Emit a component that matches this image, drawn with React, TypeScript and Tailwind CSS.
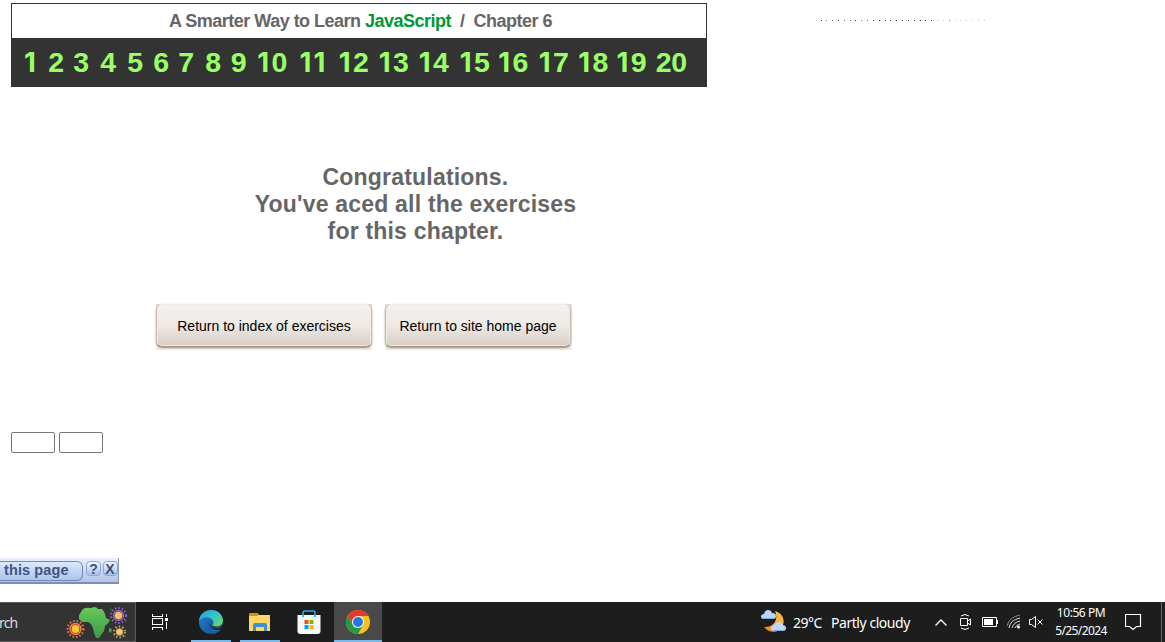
import React from "react";

const chapters = [
  { n: 1, center: 30.5 }, { n: 2, center: 56 }, { n: 3, center: 81 }, { n: 4, center: 108 },
  { n: 5, center: 135 }, { n: 6, center: 161 }, { n: 7, center: 186 }, { n: 8, center: 213 },
  { n: 9, center: 238.5 }, { n: 10, center: 271.5 }, { n: 11, center: 313 }, { n: 12, center: 353 },
  { n: 13, center: 393 }, { n: 14, center: 433 }, { n: 15, center: 474 }, { n: 16, center: 512.5 },
  { n: 17, center: 553 }, { n: 18, center: 592.5 }, { n: 19, center: 630.8 }, { n: 20, center: 671.3 },
];

const dots = [
  821, 826, 832, 838, 844, 850, 855, 861, 867, 873, 879, 885, 890, 896, 902, 908, 914, 920, 925, 931,
  937, 943, 949, 955, 960, 966, 972, 978, 984,
];

function Digit({ value, tight }: { value: string; tight: boolean }) {
  const width = tight ? "w-[14px]" : "w-[15.6px]";
  return value === "1" ? (
    <span className={"inline-block pr-[1px] text-center font-['Inter'] text-[27.5px] font-bold " + width}>1</span>
  ) : (
    <span className={"inline-block text-center " + width}>{value}</span>
  );
}

function Header() {
  return (
    <header className="ml-[11px] h-[84px] w-[696px] border border-[#333]">
      <h1 className="flex h-[34px] items-center justify-center whitespace-pre pl-[3px] text-[18px] font-bold tracking-[-0.51px] text-[#666]">
        A Smarter Way to Learn <span className="text-[#093]">JavaScript</span>{"  /  Chapter 6"}
      </h1>
      <nav className="flex h-[48px] items-baseline bg-[#333] pt-[1px] text-[28.5px] font-bold leading-[46px] text-[#9f6]">
        {chapters.map((c, i) => {
          const half = c.n > 9 ? 16 : 8;
          const prev = i ? chapters[i - 1].center + (chapters[i - 1].n > 9 ? 16 : 8) : 12;
          return (
            <a key={c.n} className="block shrink-0 whitespace-nowrap text-center" style={{ width: half * 2, marginLeft: c.center - half - prev }}>
              {String(c.n).split("").map((d, k) => <Digit key={k} value={d} tight={c.n === 11} />)}
            </a>
          );
        })}
      </nav>
    </header>
  );
}

function DottedLine() {
  return (
    <svg className="ml-[113px] mt-[17px]" width="168" height="2" shapeRendering="crispEdges">
      {dots.map((x, i) => (
        <rect key={x} x={x - 820} y="0" width="1" height="1" fill={i === 22 ? "#7777aa" : i > 19 ? "#c5c5c5" : i < 9 && i % 3 ? "#777" : "#333"} />
      ))}
    </svg>
  );
}

function ImageButton({ className, children }: { className: string; children: React.ReactNode }) {
  return (
    <div className={"h-[46px] bg-linear-to-b from-[#e4dfd9] from-5% via-[#fbfaf8] via-15% to-[#f1ede8] pb-[3px] " + className}>
      <button className="flex h-[43px] w-full items-center justify-center whitespace-nowrap rounded-[6px] border border-t-0 border-[#c5bbb1] border-b-[#a29283] bg-linear-to-b from-[#f4f1ee] via-[#eeeae6] to-[#d8cdc3] pt-[2px] text-[14px] text-black shadow-[inset_0_0_0_1px_#f1ece7,0_1px_2px_#9b8b7b]">
        {children}
      </button>
    </div>
  );
}

function PageBar() {
  const key = "flex h-[15px] w-[15px] items-center justify-center rounded-[4px] border border-[#8fa6cf] bg-linear-to-b from-[#f2f7ff] to-[#a8bfea] text-[14px] font-bold leading-none text-[#3d517d]";
  return (
    <div className="flex h-[26px] w-[119px] border-b-2 border-r border-[#8797bd] border-b-[#7d8eb7] bg-linear-to-b from-[#e9f0fd] to-[#b2c4e8]">
      <div className="mt-[3px] flex h-[20px] w-[83px] items-center whitespace-nowrap rounded-r-[6px] border border-l-0 border-[#7387b4] bg-linear-to-b from-[#dce8fb] to-[#adc4ee] pl-[4px] text-[14.5px] font-bold tracking-[0.1px] text-[#40547f]">
        this page
      </div>
      <div className="ml-[3px] mt-[3px] flex gap-[1.5px]">
        <span className={key}>?</span>
        <span className={key}>X</span>
      </div>
    </div>
  );
}

function Sun({ x, y, r, ray, core }: { x: number; y: number; r: number; ray: string; core: string }) {
  return (
    <g transform={`translate(${x} ${y})`}>
      <circle r={r} fill="none" stroke={ray} strokeWidth="2" strokeDasharray="1.5 2" />
      <circle r={r - 2.6} fill="none" stroke={ray} strokeWidth="1.6" />
      <circle r={r * 0.5} fill={core} />
    </g>
  );
}

function SearchArt() {
  return (
    <svg className="ml-[48px] shrink-0" width="64" height="34" viewBox="64 604 64 34">
      <defs>
        <linearGradient id="land" x1="0" y1="0" x2="0" y2="1"><stop stopColor="#68c958" /><stop offset="1" stopColor="#3d9b47" /></linearGradient>
      </defs>
      <path fill="url(#land)" d="M83 608Q86 606 91 607L94 606Q97 606 98 608L102 608Q104 610 105 613L106 617 110 619Q109 622 105 625L104 630 101 634 99 637H96L94 632 93 627 91 623 88 621 82 621 79 618V614ZM109 627l3 1-1 4-2-1Z" />
      <Sun x={75.5} y={628} r={8} ray="#f77a4c" core="#ffc52e" />
      <Sun x={118.5} y={614.5} r={7.5} ray="#9262c8" core="#f6be66" />
      <Sun x={119.5} y={631} r={5.5} ray="#c4a65c" core="#fbc278" />
      <path d="M111 610v-3M127 619l-2 2M113 636l2-2M126 636l-2-2" stroke="#278039" />
    </svg>
  );
}

function EdgeIcon() {
  return (
    <svg width="24" height="24" viewBox="0 0 24 24">
      <defs>
        <linearGradient id="edgeTop" x1="0" y1="0" x2="1" y2="1"><stop stopColor="#249ae1" /><stop offset=".5" stopColor="#35c7cb" /><stop offset="1" stopColor="#70db52" /></linearGradient>
        <linearGradient id="edgeLow" x1="0" y1="0" x2="1" y2="1"><stop stopColor="#2485d1" /><stop offset="1" stopColor="#104a91" /></linearGradient>
      </defs>
      <circle cx="12" cy="12" r="12" fill="url(#edgeLow)" />
      <path fill="#222" d="M14 10.5c2 2 1 4-.1 5 1 2 5 2.500 8.600.5l1.500-4-4-5Z" />
      <path fill="url(#edgeTop)" d="M0 11C.5 4 6 0 12 0c7 0 12 5 12 10.500 0 4-3 6-6 6-3 0-4.500-1-4.200-2 1-1.200 1-3 .2-4C11 6 3 6 0 11Z" />
      <path fill="#1861ab" d="M8.500 12c-2 5 2 11 7 11.500 3-.5 5.500-2.500 7-5-5 2-9 .5-10-3-.5-2 0-3 .5-4-1.500-1-3.500-.5-4.500.5Z" />
      <path fill="#222" d="M11.500 12.500c-1.300 3.500 3 6.700 8 5.600 1.500-.3 3-1 3.200-.9l1.300-2.500v3l-1 2.300c.2-.6 0-1-.7-.8-3 1-8 1-10.500-2-1.500-2-1-4-.3-4.700Z" />
    </svg>
  );
}

function FolderIcon() {
  return (
    <svg width="22" height="19" viewBox="0 0 22 19">
      <path fill="#ffd767" d="M0 2h21v16H0Z" />
      <path fill="#d9910d" d="M0 1q0-1 1-1h8l1 2-2 1H0Z" />
      <path fill="#3c91d5" d="M4 18v-6q0-2 2-2h10q2 0 2 2v6h-3v-4H7v4Z" />
    </svg>
  );
}

function StoreIcon() {
  return (
    <svg width="24" height="24" viewBox="0 0 24 24">
      <path fill="#f7f7f7" d="M.5 5h23v16q0 3-3 3h-17q-3 0-3-3Z" />
      <path d="M6 7V3q0-2 2-2h8q2 0 2 2v4" fill="none" stroke="#25abe3" strokeWidth="1.700" />
      <path fill="#f25022" d="M7.500 10h4v4h-4Z" /><path fill="#7fba00" d="M12.500 10h4v4h-4Z" />
      <path fill="#00a4ef" d="M7.500 15h4v4h-4Z" /><path fill="#ffb900" d="M12.500 15h4v4h-4Z" />
    </svg>
  );
}

function ChromeIcon() {
  return (
    <svg width="24" height="24" viewBox="0 0 24 24">
      <circle cx="12" cy="12" r="12" fill="#fbc116" />
      <path fill="#e33b2e" d="M1.600 6A12 12 0 0 1 22.400 6H12L7 15Z" />
      <path fill="#279847" d="M1.600 6A12 12 0 0 0 12 24l5.200-9-5.200 2.500L7 15Z" />
      <circle cx="12" cy="12" r="6" fill="#fff" /><circle cx="12" cy="12" r="5" fill="#2676e5" />
    </svg>
  );
}

function WeatherIcon() {
  return (
    <svg width="26" height="24" viewBox="0 0 26 24">
      <defs><linearGradient id="moon" x1="1" y1="0" x2="0" y2="1"><stop stopColor="#ffc84d" /><stop offset="1" stopColor="#f58618" /></linearGradient></defs>
      <path fill="url(#moon)" d="M14 1C21 3 24 9 22 15 20 22 10 25 3 17 12 18 18 10 14 1Z" />
      <path fill="#b9d4fa" d="M3 9Q0 9 0 6.500 0 4 3 4 4 0 7 0q3 0 4 3 4 0 4 3t-3 3Z" />
      <path fill="#bed7fc" d="M13 21q-3 0-3-3 0-2 3-2.500Q14 12 18 12q3 0 4 3 3 .5 3 3t-3 3Z" />
      <path stroke="#7ba9eb" d="M2 8.500h11M12 20.500h11" />
    </svg>
  );
}

function TaskButton({ className, children }: { className: string; children: React.ReactNode }) {
  return <div className={"flex h-[40px] shrink-0 items-center justify-center " + className}>{children}</div>;
}

function Taskbar() {
  return (
    <footer className="flex h-[40px] w-full items-center bg-[#1d1d1d] font-['Noto_Sans',sans-serif] text-white">
      <div className="flex h-[40px] w-[136px] shrink-0 items-center overflow-hidden border border-l-0 border-[#5b5b5b] bg-[#333]">
        <span className="w-[16px] -indent-px text-[14px] tracking-[-0.8px] text-[#ddd]">rch</span>
        <SearchArt />
      </div>
      <TaskButton className="w-[48px]">
        <svg width="18" height="16" viewBox="0 0 18 16" fill="none" stroke="#fff" shapeRendering="crispEdges">
          <path d="M1.500 0v2.500h10V0M1.500 16v-2.500h10V16M1.500 4.500h10v6h-10ZM15.500 0v3M15.500 8v7" /><path fill="#fff" d="M14.500 4.500h2v2h-2Z" />
        </svg>
      </TaskButton>
      <TaskButton className="ml-[7px] w-[40px] border-b-2 border-[#76b9ed] pt-[2px]"><EdgeIcon /></TaskButton>
      <TaskButton className="ml-[9px] w-[40px] border-b-2 border-[#76b9ed] pt-[2px]"><FolderIcon /></TaskButton>
      <TaskButton className="ml-[5px] w-[48px] pr-px"><StoreIcon /></TaskButton>
      <TaskButton className="ml-px w-[48px] border-b-2 border-[#76b9ed] bg-[#494949] pt-[2px]"><ChromeIcon /></TaskButton>
      <div className="ml-[379px] flex shrink-0 items-center">
        <WeatherIcon />
        <span className="ml-[6px] w-[38px] whitespace-nowrap text-[14px] tracking-[-0.5px]">29°C</span>
        <span className="whitespace-nowrap text-[14px] tracking-[-0.45px]">Partly cloudy</span>
      </div>
      <svg className="ml-auto mr-[10px] shrink-0" width="111" height="22" viewBox="934 611 111 22" fill="none" stroke="#fff">
        <path d="m935.500 625.500 5.500-5.500 5.500 5.500" strokeWidth="1.300" />
        <path d="M960.500 618.500h7v7h-7ZM967.500 621l3-2v6l-3-2M961 616q4-3 8 0M961 628q4 3 8 0" />
        <path d="M982.500 617.500h14v9h-14ZM997.500 620v4" /><path fill="#fff" stroke="none" d="M984 619h9v6h-9Z" />
        <path stroke="#ddd" d="M1009 628q1-8 11-10M1012 628q2-6 8-7M1015 628q1-3 5-4" /><path stroke="#888" d="M1007 626q2-9 13-11" /><circle cx="1018.500" cy="627" r="1.500" fill="#fff" stroke="none" />
        <path d="M1029.500 619.500h2l4-3v11l-4-3h-2ZM1037.500 619.500l5 5M1042.500 619.500l-5 5" />
      </svg>
      <div className="mr-[18px] flex w-[52px] shrink-0 flex-col items-center whitespace-nowrap text-[12px] leading-[18px] tracking-[-0.6px]">
        <span className="tracking-[-0.45px]">10:56 PM</span><span>5/25/2024</span>
      </div>
      <svg className="mr-[19px] shrink-0" width="17" height="17" viewBox="0 0 17 17" fill="none" stroke="#fff">
        <path d="M.5.500h15v12h-4l-3.500 3-3.500-3h-4Z" strokeWidth="1.200" />
      </svg>
      <div className="mr-[3px] h-[40px] w-px shrink-0 bg-[#666]" />
    </footer>
  );
}

export default function App() {
  return (
    <div className="flex h-[642px] w-[1165px] flex-col overflow-hidden bg-white font-['Liberation_Sans',sans-serif]">
      <div className="flex h-[90px] shrink-0 items-start pt-[3px]"><Header /><DottedLine /></div>
      <main className="flex h-[468px] shrink-0 flex-col pt-[74px]">
        <p className="ml-[11px] w-[809px] whitespace-nowrap text-center text-[23px] font-bold leading-[27px] tracking-[0.2px] text-[#666]">
          Congratulations.<br />You've aced all the exercises<br />for this chapter.
        </p>
        <div className="ml-[156px] mt-[59px] flex gap-[13px]">
          <ImageButton className="w-[216px]">Return to index of exercises</ImageButton>
          <ImageButton className="w-[187px] pr-px">Return to site home page</ImageButton>
        </div>
        <div className="ml-[11px] mt-[82px] flex gap-[4px]">
          <input className="h-[21px] w-[44px] rounded-[2px] border border-[#767676]" />
          <input className="h-[21px] w-[44px] rounded-[2px] border border-[#767676]" />
        </div>
      </main>
      <PageBar />
      <div className="mt-auto"><Taskbar /></div>
    </div>
  );
}
